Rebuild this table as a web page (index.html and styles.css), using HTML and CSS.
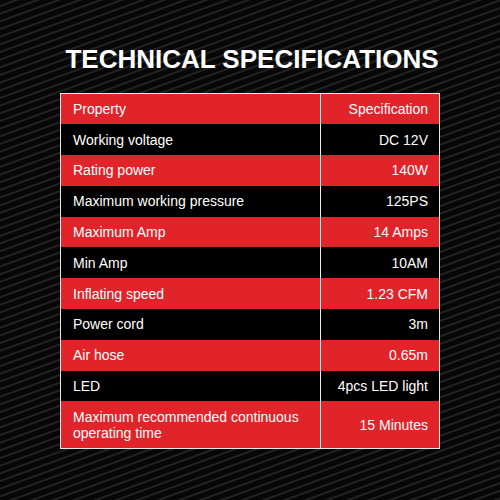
FILE: index.html
```html
<html lang="en">
<head>
    <meta charset="UTF-8">
    <meta name="viewport" content="width=device-width, initial-scale=1.0">
    <title>Technical Specifications</title>
    <link rel="stylesheet" href="styles.css">
</head>
<body>

    <div class="page">
        <h1 class="title">TECHNICAL SPECIFICATIONS</h1>

        <table class="specs">
            <tr class="row-red">
                <td>Property</td>
                <td>Specification</td>
            </tr>
            <tr class="row-black">
                <td>Working voltage</td>
                <td>DC 12V</td>
            </tr>
            <tr class="row-red">
                <td>Rating power</td>
                <td>140W</td>
            </tr>
            <tr class="row-black">
                <td>Maximum working pressure</td>
                <td>125PS</td>
            </tr>
            <tr class="row-red">
                <td>Maximum Amp</td>
                <td>14 Amps</td>
            </tr>
            <tr class="row-black">
                <td>Min Amp</td>
                <td>10AM</td>
            </tr>
            <tr class="row-red">
                <td>Inflating speed</td>
                <td>1.23 CFM</td>
            </tr>
            <tr class="row-black">
                <td>Power cord</td>
                <td>3m</td>
            </tr>
            <tr class="row-red">
                <td>Air hose</td>
                <td>0.65m</td>
            </tr>
            <tr class="row-black">
                <td>LED</td>
                <td>4pcs LED light</td>
            </tr>
            <tr class="row-red row-tall">
                <td>Maximum recommended continuous<br>operating time</td>
                <td>15 Minutes</td>
            </tr>
        </table>
    </div>

</body>
</html>
```

FILE: styles.css
```css
/* Basic Reset */
* {
    margin: 0;
    padding: 0;
    box-sizing: border-box;
}

body {
    font-family: "Liberation Sans", Arial, sans-serif;
    width: 500px;
    height: 500px;
    overflow: hidden;
    background-color: #060606;
    background-image: repeating-linear-gradient(160deg, #060606 0px, #060606 4.2px, #222 5.2px, #222 6.2px, #060606 7.2px);
}

/* Page layout */
.page {
    display: flex;
    flex-direction: column;
    align-items: center;
    padding-top: 42px;
}

/* Title */
.title {
    color: #fff;
    font-size: 26px;
    font-weight: bold;
    line-height: 34px;
    margin-left: 4px;
    margin-bottom: 17px;
}

/* Spec table */
.specs {
    width: 380px;
    border-collapse: collapse;
    border: 1px solid #e6e6e6;
    color: #fff;
    font-size: 14px;
}

.specs td {
    height: 30.8px;
    padding: 0 11px 0 12px;
    line-height: 16px;
}

.specs td:first-child {
    width: 260px;
    border-right: 1px solid #ececec;
}

.specs td:last-child {
    text-align: right;
}

.row-red {
    background-color: #e0242a;
}

.row-black {
    background-color: #000;
}

.row-tall td {
    height: 47px;
}
```
